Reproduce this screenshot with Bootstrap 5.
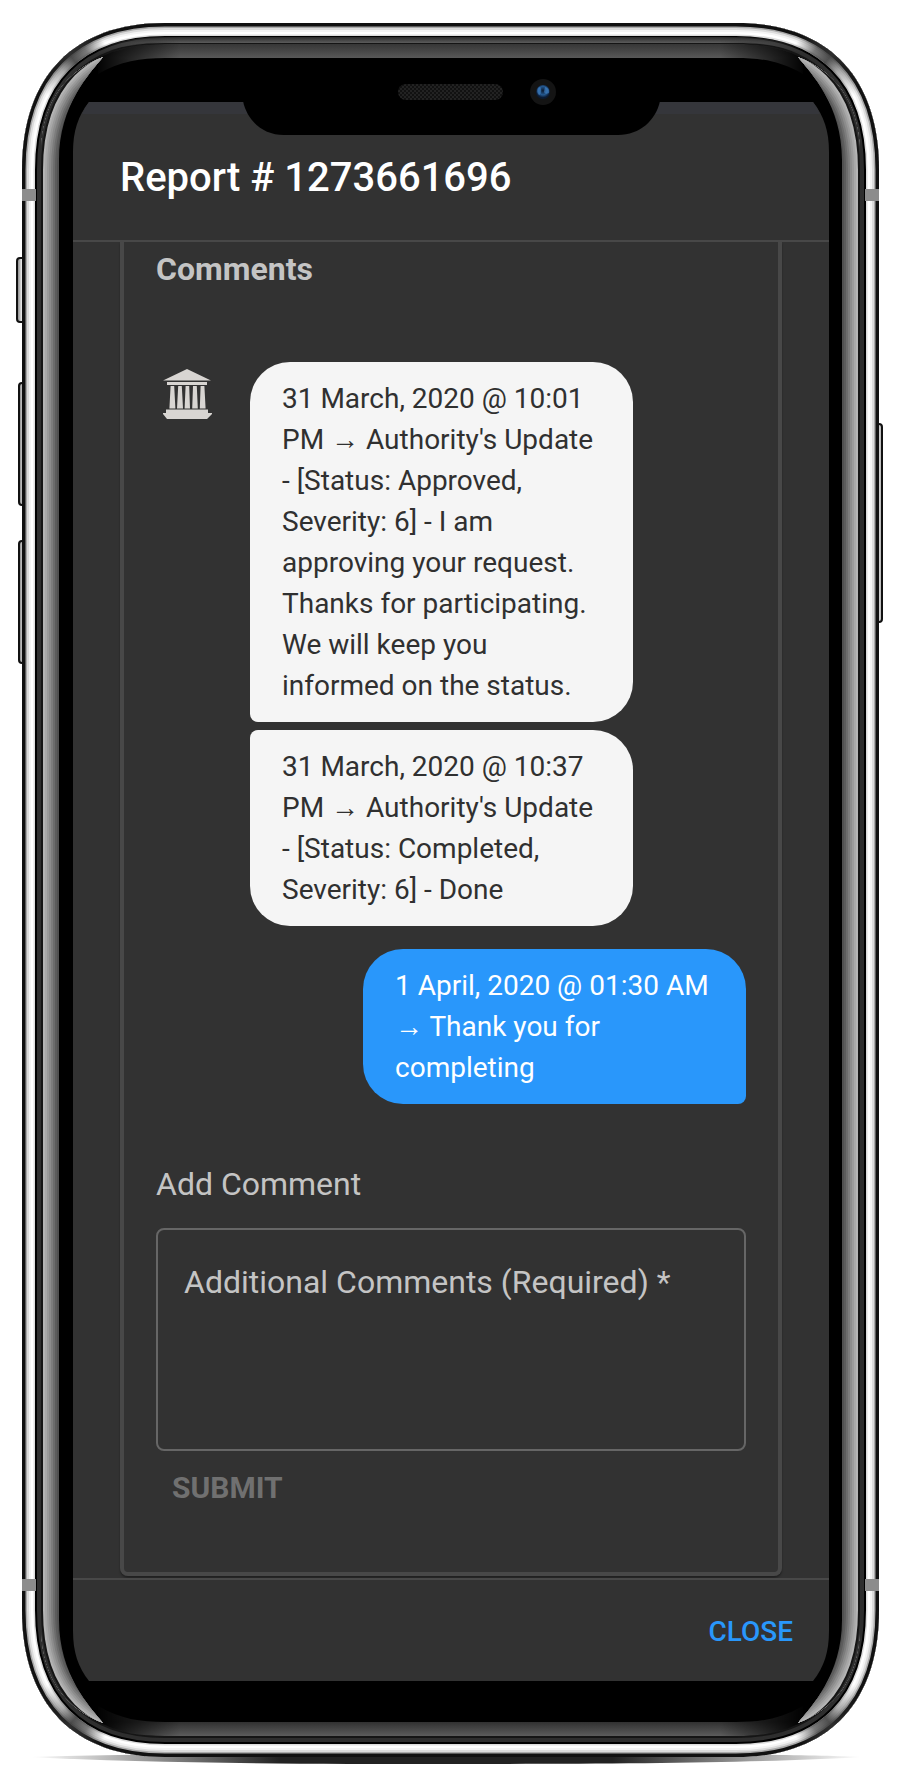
<!DOCTYPE html>
<html lang="en">
<head>
<meta charset="utf-8">
<meta name="viewport" content="width=device-width, initial-scale=1">
<title>Report # 1273661696</title>
<link href="https://cdn.jsdelivr.net/npm/bootstrap@5.3.0/dist/css/bootstrap.min.css" rel="stylesheet">
<style>
  body { background: #fff; color: #c4c4c4; font-family: Roboto, "Liberation Sans", sans-serif; font-size: 32px; line-height: 40px; }
  .device { padding: 114px 69px 88px 73px; }
  .device-art { inset: 0; width: 100%; height: 100%; }
  .app-header { padding: 40px 47px 38px; border-bottom: 2px solid #484848; }
  .app-title { font-size: 40px; line-height: 48px; font-weight: 500; color: #fff; }
  .app-main { padding: 0 47px 2px; }
  .panel { border: 4px solid #484848; border-top: 0; border-radius: 0 0 8px 8px; padding: 7px 32px 56px; box-shadow: 0 2px 2px rgba(0, 0, 0, .35); }
  .section-title { font-size: 32px; line-height: 40px; margin-bottom: 73px; }
  .thread { gap: 23px; }
  .avatar { width: 62px; height: 62px; }
  .turn { gap: 32px; }
  .bubbles { gap: 8px; }
  .bubble { width: 383px; padding: 16px 32px; border-radius: 40px; font-size: 28px; line-height: 41px; }
  .bubble-in { background: #f5f5f5; color: #303030; border-bottom-left-radius: 8px; }
  .bubble-in + .bubble-in { border-radius: 8px 40px 40px 40px; }
  .bubble-out { background: #2997fb; color: #fff; border-bottom-right-radius: 8px; }
  .comment-label { margin: 60px 0 24px; }
  .comment-box { height: 223px; padding: 32px 26px; font-size: 32px; line-height: 40px; background: transparent; border: 2px solid #666; border-radius: 8px; color: #c4c4c4; resize: none; }
  .comment-box::placeholder { color: #c4c4c4; opacity: 1; }
  .comment-box:focus { background: transparent; color: #fff; border-color: #2997fb; box-shadow: none; }
  .action { padding: 8px 16px; border: 0; background: none; line-height: 40px; }
  .action-submit { font-size: 30px; margin-top: 9px; }
  .action-submit:disabled { color: #707070; opacity: 1; border: 0; }
  .action-close { font-size: 28px; font-weight: 500; color: #2997fb; }
  .action-close:hover { color: #6cb8ff; }
  .app-footer { padding: 24px 20px 21px; border-top: 2px solid #484848; }
</style>
</head>
<body>
<div class="device position-relative">
  <svg class="device-art position-absolute" viewBox="0 0 898 1769" preserveAspectRatio="none" aria-hidden="true">
    <defs>
      <path id="shell" d="M22 170C22 75 75 23 165 23H736C826 23 879 75 879 170V1610C879 1705 826 1757 736 1757H165C75 1757 22 1705 22 1610Z"/>
      <clipPath id="shellClip"><use href="#shell"/></clipPath>
      <clipPath id="cornerClip"><path d="M0 0H200V200H0Z"/></clipPath>
      <clipPath id="sideGlare">
        <path d="M41 150C43 100 67 71 103 57C90 73 59 105 59 160V1620C59 1675 90 1707 103 1723C67 1709 43 1680 41 1630Z"/>
        <path d="M860 150C858 100 834 71 798 57C811 73 842 105 842 160V1620C842 1675 811 1707 798 1723C834 1709 858 1680 860 1630Z"/>
      </clipPath>
      <linearGradient id="fadeEnds" gradientUnits="userSpaceOnUse" x1="95" y1="0" x2="806" y2="0"><stop offset="0" stop-color="#000"/><stop offset=".12" stop-color="#fff"/><stop offset=".88" stop-color="#fff"/><stop offset="1" stop-color="#000"/></linearGradient>
      <mask id="endsMask" maskUnits="userSpaceOnUse" x="0" y="0" width="898" height="1769"><path fill="url(#fadeEnds)" d="M95 0H806V1769H95Z"/></mask>
      <linearGradient id="topGlare" gradientUnits="userSpaceOnUse" x1="0" y1="44" x2="0" y2="58"><stop offset="0" stop-color="#363636"/><stop offset="1" stop-color="#585858"/></linearGradient>
      <linearGradient id="bottomGlare" gradientUnits="userSpaceOnUse" x1="0" y1="1722" x2="0" y2="1736"><stop offset="0" stop-color="#303030"/><stop offset="1" stop-color="#5c5c5c"/></linearGradient>
      <linearGradient id="rim" gradientUnits="userSpaceOnUse" x1="0" y1="37" x2="0" y2="43"><stop offset="0" stop-color="#2a2a2a"/><stop offset="1" stop-color="#5c5c5c"/></linearGradient>
      <linearGradient id="button"><stop offset="0" stop-color="#777"/><stop offset=".5" stop-color="#e2e2e2"/><stop offset="1" stop-color="#aaa"/></linearGradient>
      <linearGradient id="floor"><stop offset="0" stop-color="#222" stop-opacity="0"/><stop offset=".3" stop-color="#222"/><stop offset=".7" stop-color="#222"/><stop offset="1" stop-color="#222" stop-opacity="0"/></linearGradient>
      <linearGradient id="cornerShade" gradientUnits="userSpaceOnUse" x1="46" y1="94" x2="106" y2="44"><stop offset="0" stop-color="#333" stop-opacity="0"/><stop offset=".35" stop-color="#333" stop-opacity=".4"/><stop offset=".55" stop-color="#333" stop-opacity=".85"/><stop offset=".75" stop-color="#333" stop-opacity=".65"/><stop offset="1" stop-color="#444" stop-opacity="0"/></linearGradient>
      <radialGradient id="lens" cx=".5" cy=".4"><stop offset="0" stop-color="#0c1a30"/><stop offset=".6" stop-color="#24588f"/><stop offset="1" stop-color="#0a1a33"/></radialGradient>
      <pattern id="mesh" width="4" height="4" patternUnits="userSpaceOnUse"><path fill="#111" d="M0 0h4v4H0z"/><path fill="#222" d="M0 0h2v2H0zM2 2h2v2H2z"/></pattern>
      <g id="corner" clip-path="url(#cornerClip)"><g clip-path="url(#shellClip)"><use href="#shell" fill="none" stroke="url(#cornerShade)" stroke-width="26"/></g></g>
    </defs>

    <path fill="url(#floor)" d="M30 1757C150 1752 750 1752 862 1757C760 1763 620 1764 450 1764S140 1763 30 1757Z"/>

    <g stroke="#111" stroke-width="2" fill="url(#button)">
      <rect x="17" y="258" width="9" height="64" rx="3"/>
      <rect x="19" y="383" width="8" height="122" rx="3"/>
      <rect x="19" y="541" width="8" height="122" rx="3"/>
      <rect x="874" y="424" width="8" height="198" rx="3"/>
    </g>

    <use href="#shell" fill="#000"/>
    <g clip-path="url(#shellClip)" fill="none">
      <use href="#shell" stroke="#151515" stroke-width="42"/>
      <use href="#shell" stroke="#2e2e2e" stroke-width="38"/>
      <use href="#shell" stroke="#000" stroke-width="30"/>
      <use href="#shell" stroke="#ddd" stroke-width="26"/>
      <use href="#shell" stroke="#fff" stroke-width="23"/>
      <use href="#shell" stroke="#f4f4f4" stroke-width="18"/>
      <use href="#shell" stroke="#dcdcdc" stroke-width="14"/>
      <use href="#shell" stroke="#aaa" stroke-width="10"/>
      <use href="#shell" stroke="#111" stroke-width="7"/>
    </g>

    <use href="#corner"/>
    <use href="#corner" transform="matrix(-1 0 0 1 901 0)"/>
    <use href="#corner" transform="matrix(1 0 0 -1 0 1780)"/>
    <use href="#corner" transform="matrix(-1 0 0 -1 901 1780)"/>

    <g mask="url(#endsMask)">
      <path fill="url(#rim)" d="M95 49C120 40 140 37 165 37H736C761 37 781 40 806 49V55C781 46 761 43 736 43H165C140 43 120 46 95 55Z"/>
      <path fill="url(#topGlare)" d="M98 58C120 47 140 44 165 44H736C761 44 781 47 803 58V74C780 61 761 58 736 58H165C140 58 121 61 98 74Z"/>
      <path fill="url(#bottomGlare)" d="M98 1722C120 1733 140 1736 165 1736H736C761 1736 781 1733 803 1722V1706C780 1719 761 1722 736 1722H165C140 1722 121 1719 98 1706Z"/>
    </g>

    <g clip-path="url(#sideGlare)" fill="none">
      <use href="#shell" stroke="#505050" stroke-width="80"/>
      <use href="#shell" stroke="#5c5c5c" stroke-width="70"/>
      <use href="#shell" stroke="#6c6c6c" stroke-width="66"/>
      <use href="#shell" stroke="#7c7c7c" stroke-width="62"/>
      <use href="#shell" stroke="#8c8c8c" stroke-width="58"/>
      <use href="#shell" stroke="#9a9a9a" stroke-width="54"/>
      <use href="#shell" stroke="#a8a8a8" stroke-width="50"/>
      <use href="#shell" stroke="#b4b4b4" stroke-width="46"/>
      <use href="#shell" stroke="#151515" stroke-width="42"/>
      <use href="#shell" stroke="#2e2e2e" stroke-width="38"/>
    </g>

    <path fill="#8c8c8c" d="M22 189h14v12H22zM865 189h14v12h-14zM22 1579h14v12H22zM865 1579h14v12h-14z"/>

    <path fill="#323232" d="M73 152C73 131 78 116 89 102H813C824 116 829 131 829 152V1631C829 1652 824 1667 813 1681H89C78 1667 73 1652 73 1631Z"/>
    <path fill="#35363b" d="M82 114Q85 107 89 102H813Q817 107 820 114Z"/>
    <path fill="#000" d="M243 101C247 120 262 135 284 135H618C640 135 656 120 660 101Z"/>
    <rect x="398" y="84" width="105" height="16" rx="8" fill="url(#mesh)"/>
    <circle cx="543" cy="92" r="13" fill="#141414"/>
    <circle cx="543" cy="92" r="7" fill="url(#lens)"/>
    <path d="M538 88q3-3 3 2t-2 5q-3-3-1-7zM545 87q5 1 4 6-4 2-5-1z" fill="#4a90d8" opacity=".5"/>
  </svg>

  <div class="position-relative d-flex flex-column">
    <header class="app-header">
      <h1 class="app-title m-0">Report # 1273661696</h1>
    </header>

    <main class="app-main">
      <section class="panel">
        <h2 class="section-title fw-bold">Comments</h2>

        <div class="thread d-flex flex-column">
          <div class="turn d-flex align-items-start">
            <svg class="avatar flex-shrink-0" viewBox="0 0 62 62" fill="#d8d5d2" role="img" aria-label="Authority">
              <path d="M31 7L55 18.500H7ZM11 20H51V23H11ZM14.600 24H18.200L19.400 46.500H13.400ZM22.200 24H25.800L27 46.500H21ZM29.600 24H33.200L34 46.500H28.600ZM37 24H40.800L41.800 46.500H36.200ZM44.600 24H48.400L49.600 46.500H43.800ZM10 47.500H52V51H56V52L51 57H11L7 52V51H10Z"/>
            </svg>
            <div class="bubbles d-flex flex-column">
              <div class="bubble bubble-in">31 March, 2020 @ 10:01 PM → Authority's Update - [Status: Approved, Severity: 6] - I am approving your request. Thanks for participating. We will keep you informed on the status.</div>
              <div class="bubble bubble-in">31 March, 2020 @ 10:37 PM → Authority's Update - [Status: Completed, Severity: 6] - Done</div>
            </div>
          </div>
          <div class="turn d-flex justify-content-end">
            <div class="bubble bubble-out">1 April, 2020 @ 01:30 AM → Thank you for completing</div>
          </div>
        </div>

        <form>
          <label class="comment-label d-block" for="comment">Add Comment</label>
          <textarea class="comment-box form-control" id="comment" placeholder="Additional Comments (Required) *" required></textarea>
          <button class="action action-submit btn fw-bold" type="submit" disabled>SUBMIT</button>
        </form>
      </section>
    </main>

    <footer class="app-footer d-flex justify-content-end">
      <button class="action action-close btn" type="button">CLOSE</button>
    </footer>
  </div>
</div>
<script src="https://cdn.jsdelivr.net/npm/bootstrap@5.3.0/dist/js/bootstrap.bundle.min.js"></script>
</body>
</html>
